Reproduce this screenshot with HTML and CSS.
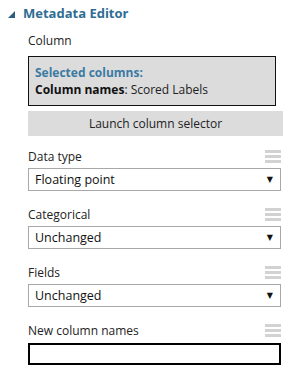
FILE: index.html
```html
<!DOCTYPE html>
<html>
<head>
<meta charset="utf-8">
<link rel="stylesheet" href="styles.css">
</head>
<body>
<div class="panel">
  <div class="header">
    <svg class="tri" width="7" height="7" viewBox="0 0 7 7"><polygon points="0,7 7,7 7,0" fill="#2b5e80"/></svg>
    <span class="title">Metadata Editor</span>
  </div>
  <div class="content">
    <div class="label">Column</div>
    <div class="selbox">
      <div class="selhead">Selected columns:</div>
      <div class="selline"><b>Column names</b>: Scored Labels</div>
    </div>
    <div class="btn">Launch column selector</div>

    <div class="field first">
      <div class="frow"><span>Data type</span><span class="ham"><i></i><i></i><i></i></span></div>
      <div class="select"><span>Floating point</span><span class="arr">▼</span></div>
    </div>
    <div class="field">
      <div class="frow"><span>Categorical</span><span class="ham"><i></i><i></i><i></i></span></div>
      <div class="select"><span>Unchanged</span><span class="arr">▼</span></div>
    </div>
    <div class="field">
      <div class="frow"><span>Fields</span><span class="ham"><i></i><i></i><i></i></span></div>
      <div class="select"><span>Unchanged</span><span class="arr">▼</span></div>
    </div>
    <div class="field">
      <div class="frow"><span>New column names</span><span class="ham"><i></i><i></i><i></i></span></div>
      <div class="input"></div>
    </div>
  </div>
</div>
</body>
</html>
```
FILE: styles.css
```css
html, body {
  margin: 0;
  padding: 0;
  background: #ffffff;
}
body {
  font-family: "Open Sans", "Noto Sans", sans-serif;
  font-size: 12px;
  color: #222222;
  width: 307px;
  height: 372px;
  overflow: hidden;
}
.header {
  display: flex;
  align-items: center;
  padding: 4px 0 0 8px;
  height: 18px;
}
.tri {
  display: block;
  margin-right: 8px;
  margin-top: 2px;
}
.title {
  font-weight: 700;
  font-size: 13px;
  color: #2f6d93;
  line-height: 18px;
}
.content {
  padding: 11px 26px 0 28px;
}
.label {
  line-height: 16px;
  height: 16px;
}
.selbox {
  margin-top: 7px;
  width: 248px;
  height: 50px;
  border: 1px solid #111111;
  background: #dcdcdc;
  padding: 7px 0 0 6px;
  box-sizing: border-box;
  line-height: 17px;
}
.selhead {
  font-weight: 700;
  color: #3b7aa3;
}
.selline b {
  font-weight: 700;
  color: #111;
}
.btn {
  margin-top: 5px;
  height: 25px;
  background: #dcdcdc;
  text-align: center;
  line-height: 25px;
  width: 255px;
}
.field {
  margin-top: 16px;
}
.field.first {
  margin-top: 13px;
}
.frow {
  display: flex;
  justify-content: space-between;
  align-items: flex-start;
  line-height: 16px;
  height: 16px;
}
.ham {
  display: flex;
  flex-direction: column;
  gap: 2px;
  width: 16px;
  padding-top: 1px;
}
.ham i {
  display: block;
  height: 3px;
  background: #d2d2d2;
}
.select {
  margin-top: 3px;
  height: 23px;
  border: 1px solid #a8a8a8;
  box-sizing: border-box;
  display: flex;
  align-items: center;
  justify-content: space-between;
  padding: 0 7px 0 6px;
  font-size: 12.5px;
  color: #111;
}
.arr {
  font-size: 8px;
  font-family: "DejaVu Sans", sans-serif;
  color: #111;
}
.input {
  margin-top: 4px;
  height: 22px;
  border: 2px solid #000;
  box-sizing: border-box;
}
```
